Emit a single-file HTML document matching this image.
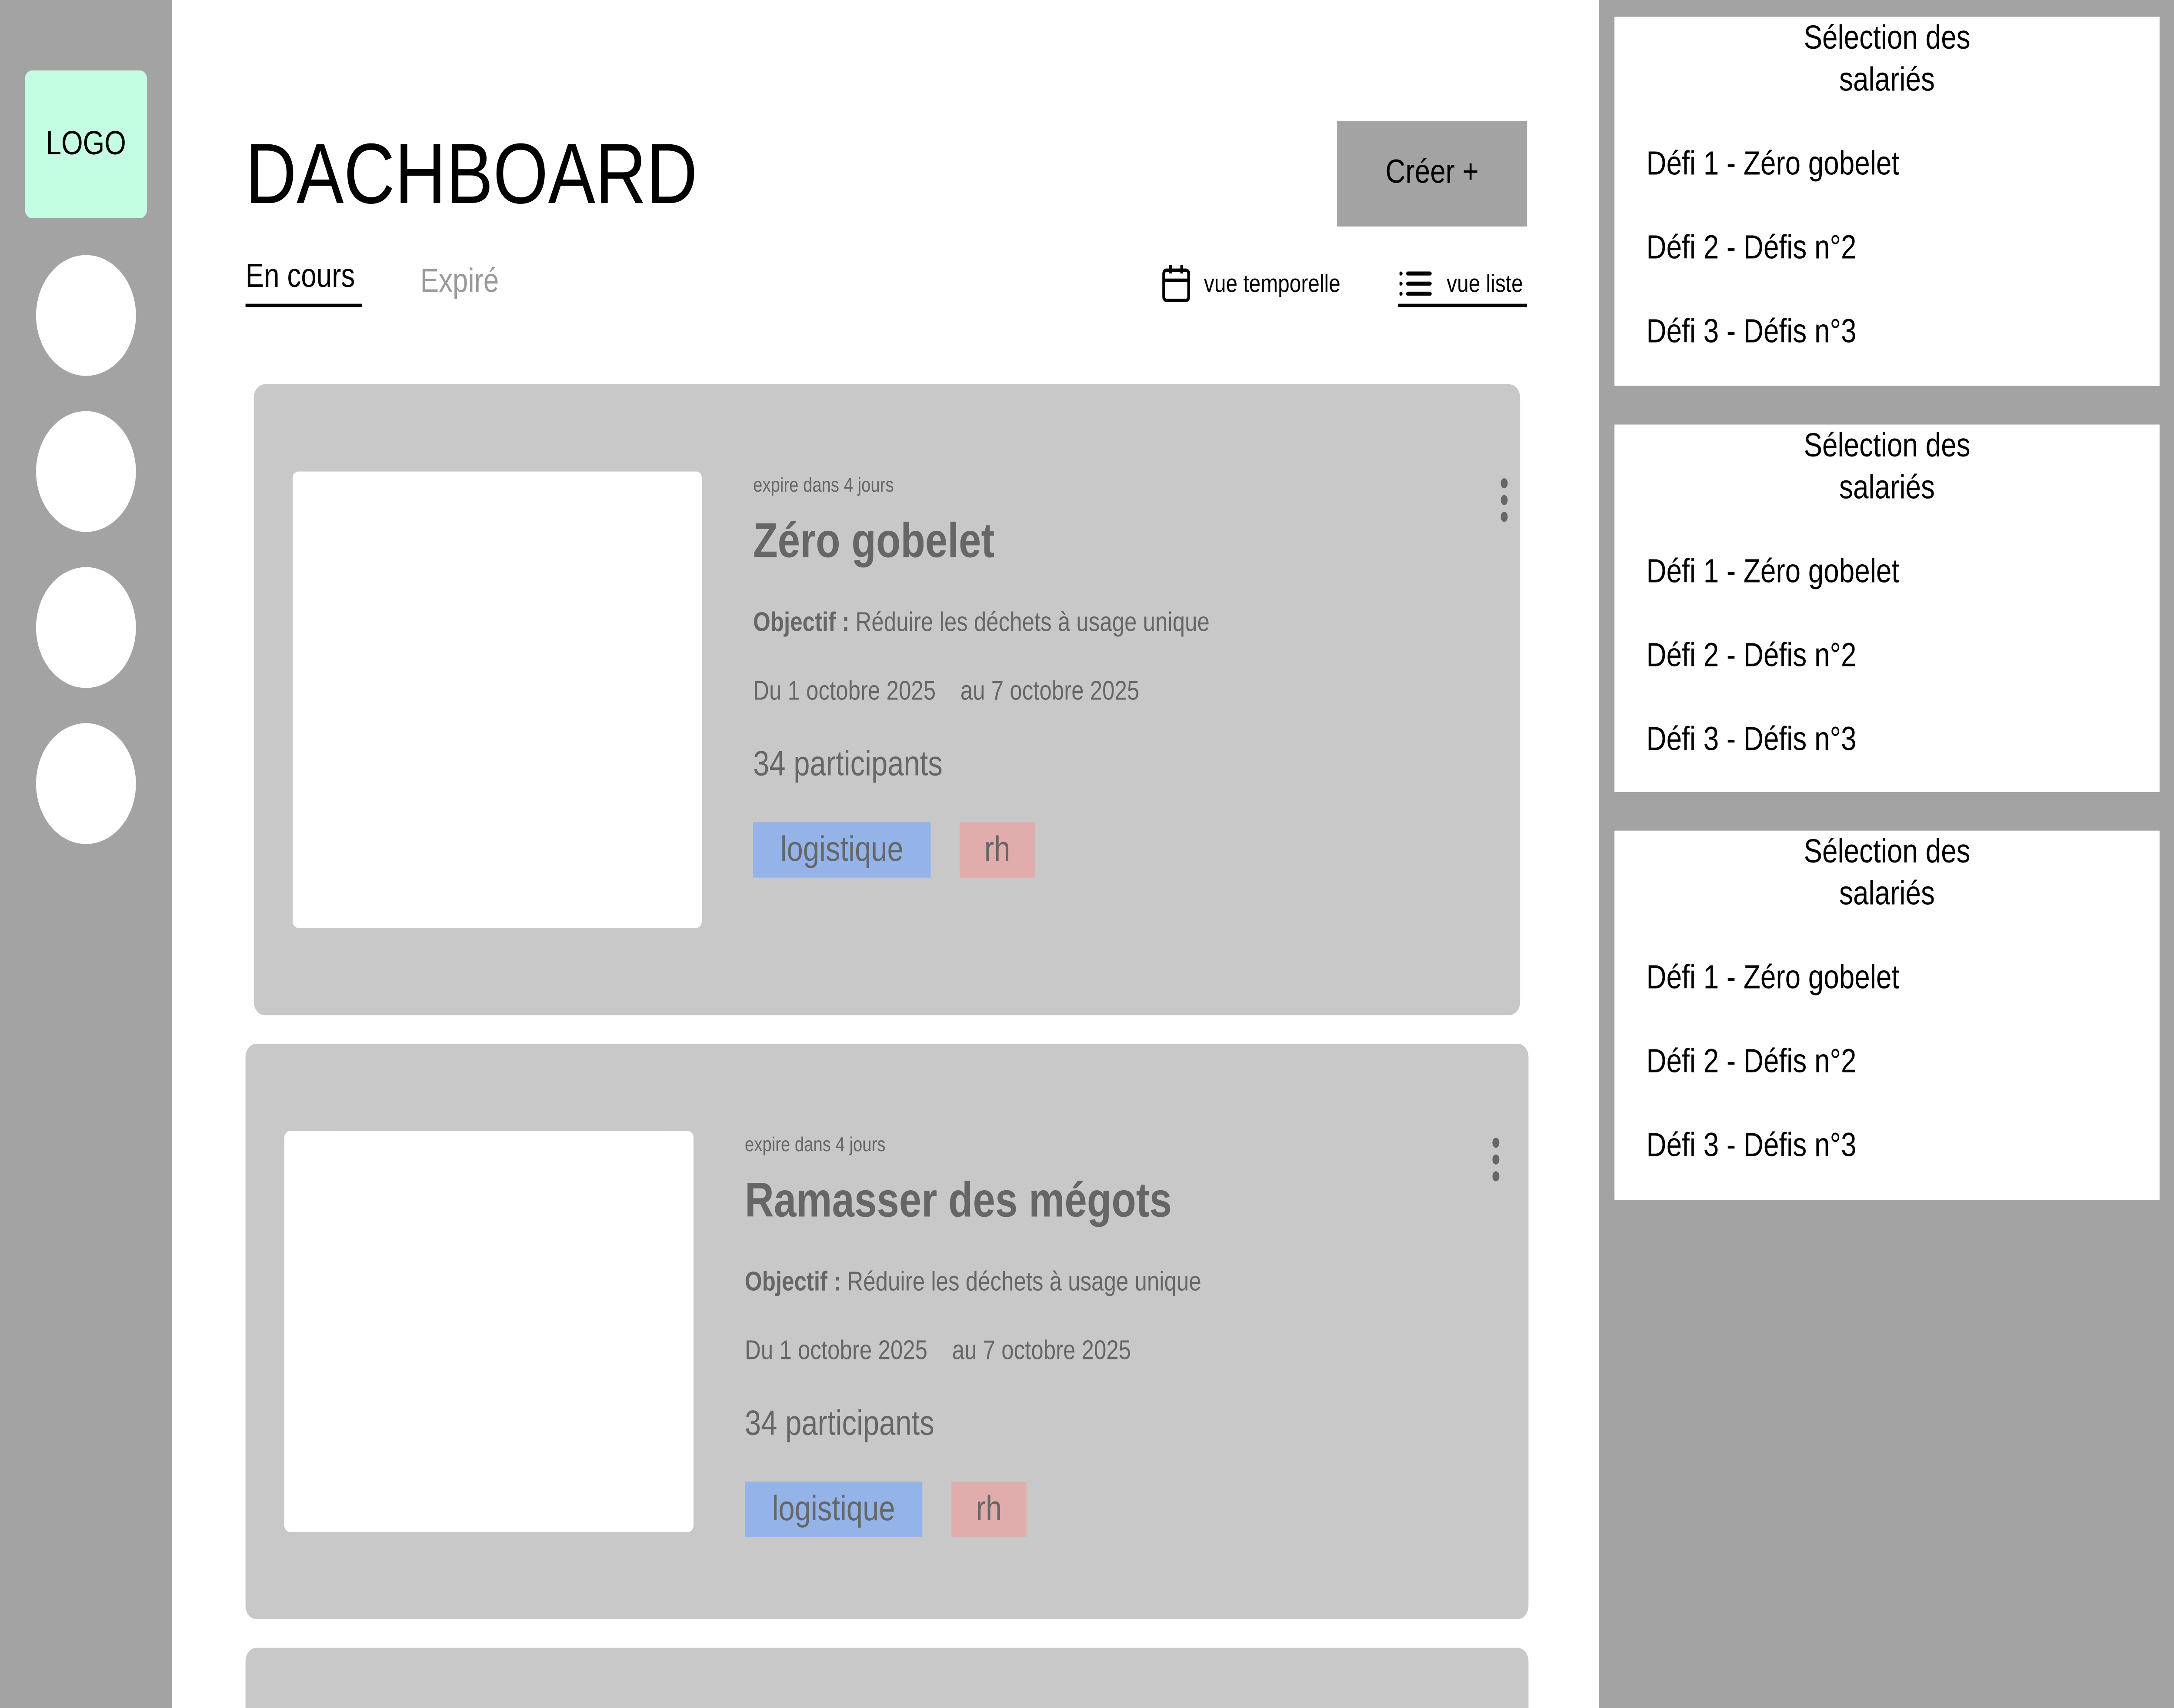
<!DOCTYPE html>
<html><head><meta charset="utf-8"><style>
*{margin:0;padding:0;box-sizing:border-box}
html,body{width:100%;height:100%;overflow:hidden;background:#fff}
#w{position:absolute;left:0;top:0;width:1568px;height:1018px;transform:scale(3.19,3.86);transform-origin:0 0;font-family:"Liberation Sans",sans-serif;overflow:hidden}
.a{position:absolute;white-space:nowrap}
.c{position:absolute;left:26px;width:72px;height:72px;border-radius:50%;background:#fff}
.card{position:absolute;background:#c8c8c8;border-radius:8px}
.img{position:absolute;background:#fff;border-radius:4px}
.g{color:#666}
.tag{position:absolute;height:33px;font-size:21px;line-height:33px;text-align:center;color:#666}
.dot{position:absolute;width:5px;height:6px;border-radius:50%;background:#666}
.rc{position:absolute;left:1164px;width:393px;height:220px;background:#fff}
.rc .t{position:absolute;left:0;width:100%;top:1px;text-align:center;font-size:20px;line-height:25px}
.rc .i{position:absolute;left:23px;font-size:20px}
</style></head><body><div id="w">
<div class="a" style="left:0;top:0;width:124px;height:1018px;background:#a3a3a3"></div>
<div class="a" style="left:18px;top:42px;width:88px;height:88px;background:#c3fde2;border-radius:5px;font-size:20px;line-height:88px;text-align:center">LOGO</div>
<div class="c" style="top:152px"></div><div class="c" style="top:245px"></div><div class="c" style="top:338px"></div><div class="c" style="top:431px"></div>
<div class="a" style="left:1153px;top:0;width:415px;height:1018px;background:#a3a3a3"></div>

<div class="a" style="left:177px;top:74px;font-size:51px;line-height:60px">DACHBOARD</div>
<div class="a" style="left:964px;top:72px;width:137px;height:63px;background:#a3a3a3;font-size:20px;line-height:63px;text-align:center">Créer +</div>
<div class="a" style="left:177px;top:154px;font-size:20px">En cours</div>
<div class="a" style="left:177px;top:181px;width:84px;height:2px;background:#000"></div>
<div class="a" style="left:303px;top:157px;font-size:20px;color:#999">Expiré</div>
<svg class="a" style="left:837px;top:157px" width="22" height="24" viewBox="0 0 22 24"><rect x="2" y="4" width="18" height="18" rx="2" fill="none" stroke="#000" stroke-width="2"/><line x1="2" y1="10" x2="20" y2="10" stroke="#000" stroke-width="2"/><line x1="7" y1="1" x2="7" y2="6" stroke="#000" stroke-width="2"/><line x1="15" y1="1" x2="15" y2="6" stroke="#000" stroke-width="2"/></svg>
<div class="a" style="left:868px;top:161px;font-size:15px">vue temporelle</div>
<svg class="a" style="left:1009px;top:161px" width="24" height="16" viewBox="0 0 24 16"><g stroke="#000" stroke-width="2.4" stroke-linecap="round"><line x1="1" y1="2" x2="1" y2="2"/><line x1="1" y1="8" x2="1" y2="8"/><line x1="1" y1="14" x2="1" y2="14"/><line x1="6" y1="2" x2="22" y2="2"/><line x1="6" y1="8" x2="22" y2="8"/><line x1="6" y1="14" x2="22" y2="14"/></g></svg>
<div class="a" style="left:1043px;top:161px;font-size:15px">vue liste</div>
<div class="a" style="left:1008px;top:181px;width:93px;height:2px;background:#000"></div>

<div class="card" style="left:183px;top:229px;width:913px;height:376px"></div>
<div class="img" style="left:211px;top:281px;width:295px;height:272px"></div>
<div class="a g" style="left:543px;top:282px;font-size:12px">expire dans 4 jours</div>
<div class="a g" style="left:543px;top:307px;font-size:29px;font-weight:bold">Zéro gobelet</div>
<div class="a g" style="left:543px;top:363px;font-size:16px"><b>Objectif :</b> Réduire les déchets à usage unique</div>
<div class="a g" style="left:543px;top:404px;font-size:16px">Du 1 octobre 2025&nbsp;&nbsp;&nbsp; au 7 octobre 2025</div>
<div class="a g" style="left:543px;top:444px;font-size:21px">34 participants</div>
<div class="tag" style="left:543px;top:490px;width:128px;background:#94b3e8">logistique</div>
<div class="tag" style="left:692px;top:490px;width:54px;background:#e0acac">rh</div>
<div class="dot" style="left:1082px;top:285px"></div><div class="dot" style="left:1082px;top:295px"></div><div class="dot" style="left:1082px;top:305px"></div>

<div class="card" style="left:177px;top:622px;width:925px;height:343px"></div>
<div class="img" style="left:205px;top:674px;width:295px;height:239px"></div>
<div class="a g" style="left:537px;top:675px;font-size:12px">expire dans 4 jours</div>
<div class="a g" style="left:537px;top:700px;font-size:29px;font-weight:bold">Ramasser des mégots</div>
<div class="a g" style="left:537px;top:756px;font-size:16px"><b>Objectif :</b> Réduire les déchets à usage unique</div>
<div class="a g" style="left:537px;top:797px;font-size:16px">Du 1 octobre 2025&nbsp;&nbsp;&nbsp; au 7 octobre 2025</div>
<div class="a g" style="left:537px;top:837px;font-size:21px">34 participants</div>
<div class="tag" style="left:537px;top:883px;width:128px;background:#94b3e8">logistique</div>
<div class="tag" style="left:686px;top:883px;width:54px;background:#e0acac">rh</div>
<div class="dot" style="left:1076px;top:678px"></div><div class="dot" style="left:1076px;top:688px"></div><div class="dot" style="left:1076px;top:698px"></div>

<div class="card" style="left:177px;top:982px;width:925px;height:60px"></div>

<div class="rc" style="top:10px"><div class="t">Sélection des<br>salariés</div><div class="i" style="top:77px">Défi 1 - Zéro gobelet</div><div class="i" style="top:127px">Défi 2 - Défis n°2</div><div class="i" style="top:177px">Défi 3 - Défis n°3</div></div>
<div class="rc" style="top:253px;height:219px"><div class="t">Sélection des<br>salariés</div><div class="i" style="top:77px">Défi 1 - Zéro gobelet</div><div class="i" style="top:127px">Défi 2 - Défis n°2</div><div class="i" style="top:177px">Défi 3 - Défis n°3</div></div>
<div class="rc" style="top:495px"><div class="t">Sélection des<br>salariés</div><div class="i" style="top:77px">Défi 1 - Zéro gobelet</div><div class="i" style="top:127px">Défi 2 - Défis n°2</div><div class="i" style="top:177px">Défi 3 - Défis n°3</div></div>
</div></body></html>
